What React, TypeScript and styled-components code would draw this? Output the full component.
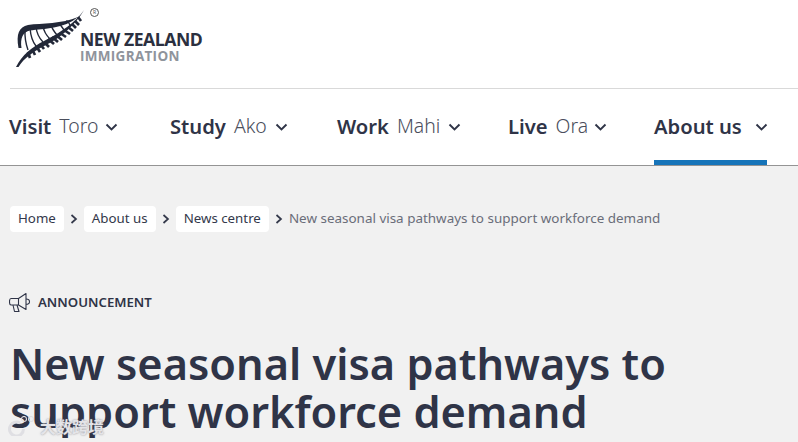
import React from 'react';
import styled, { createGlobalStyle } from 'styled-components';

const GlobalStyle = createGlobalStyle`
  html, body {
    margin: 0;
    padding: 0;
    height: 442px;
    overflow: hidden;
    background: #f1f1f1;
    font-family: "Noto Sans", "Liberation Sans", sans-serif;
    color: #2f3447;
  }
`;

const Page = styled.div`
  position: relative;
  width: 798px;
  height: 442px;
  overflow: hidden;
`;

const Header = styled.header`
  background: #fff;
  border-bottom: 1px solid #949494;
`;

const LogoBar = styled.div`
  height: 88px;
  margin-left: 10px;
  border-bottom: 1px solid #d9d9d9;
  display: flex;
  align-items: flex-start;
  position: relative;
`;

const FernMark = styled.svg`
  width: 72px;
  height: 60px;
  margin: 9px 0 0 5px;
  flex: none;
`;

const LogoText = styled.div`
  margin: 30px 0 0 -7px;
`;

const LogoMain = styled.div`
  font-family: "Open Sans", sans-serif;
  font-size: 17.6px;
  font-weight: 700;
  letter-spacing: -0.45px;
  line-height: 18px;
  color: #2b3040;
  white-space: nowrap;
`;

const LogoSub = styled.div`
  font-family: "Open Sans", sans-serif;
  font-size: 13.5px;
  font-weight: 700;
  letter-spacing: 0.3px;
  line-height: 16px;
  color: #8f949c;
`;

const Nav = styled.nav`
  height: 76px;
  padding-left: 9px;
  display: flex;
`;

const NavItem = styled.div<{ $width: number }>`
  width: ${p => p.$width}px;
  height: 76px;
  box-sizing: border-box;
  padding-top: 21px;
  display: flex;
  align-items: flex-start;
  font-size: 20.2px;
  line-height: 32px;
  white-space: nowrap;
`;

const ActiveTab = styled.div`
  width: 113px;
  height: 76px;
  margin-top: -21px;
  padding-top: 21px;
  box-sizing: border-box;
  display: flex;
  align-items: flex-start;
  border-bottom: 5px solid #1674b9;
`;

const NavMain = styled.span`
  font-weight: 600;
  color: #2f3447;
  margin-right: 8px;
`;

const NavSub = styled.span`
  font-size: 19.4px;
  font-weight: 300;
  color: #4a4e5c;
`;

const Chevron = styled.svg<{ $gap: number }>`
  width: 13px;
  height: 9px;
  margin: 13px 0 0 ${p => p.$gap}px;
  flex: none;
`;

const Crumbs = styled.ol`
  list-style: none;
  margin: 0;
  padding: 40px 0 0 10px;
  display: flex;
  align-items: center;
  height: 26px;
  font-size: 13.3px;
`;

const CrumbLink = styled.li`
  background: #fff;
  border-radius: 4px;
  height: 26px;
  line-height: 24px;
  padding: 0 8px;
  color: #33384a;
  white-space: nowrap;
`;

const CrumbArrow = styled.svg`
  width: 8px;
  height: 10px;
  margin: 0 6px;
  flex: none;
`;

const CrumbCurrent = styled.li`
  color: #6a6d79;
  font-size: 13.45px;
  white-space: nowrap;
  line-height: 24px;
  height: 26px;
`;

const Label = styled.div`
  margin: 59px 0 0 9px;
  display: flex;
  align-items: center;
  gap: 7px;
  height: 22px;
  font-size: 13.2px;
  font-weight: 600;
  color: #2f3447;
`;

const Title = styled.h1`
  margin: 27px 0 0 10px;
  width: 720px;
  font-size: 43.3px;
  line-height: 48px;
  font-weight: 600;
  color: #2f3447;
`;

const Watermark = styled.div`
  position: absolute;
  left: 8px;
  top: 413px;
  display: flex;
  align-items: center;
  gap: 13px;
  color: #e4e4e8;
  font-size: 16px;
  font-weight: 700;
  line-height: 26px;
  font-family: "Noto Sans CJK SC", sans-serif;
  text-shadow: 0 0 2px rgba(110, 110, 120, 0.75);
`;

const WatermarkIcon = styled.svg`
  width: 28px;
  height: 20px;
  margin-right: -9px;
  flex: none;
`;

const Registered = styled.span`
  position: absolute;
  left: 80px;
  top: 8px;
  width: 7px;
  height: 7px;
  border: 1px solid #555;
  border-radius: 50%;
  font-size: 5px;
  line-height: 7px;
  text-align: center;
  color: #555;
`;

const Down = ({ gap }: { gap: number }) => (
  <Chevron $gap={gap} viewBox="0 0 13 9" fill="none" stroke="#2f3447" strokeWidth="1.9">
    <path d="M1.500 1.500 6.500 6.500 11.500 1.500" />
  </Chevron>
);

const Arrow = () => (
  <CrumbArrow viewBox="0 0 8 10" fill="none" stroke="#33384a" strokeWidth="1.7">
    <path d="M1.500 1 6 5 1.500 9" />
  </CrumbArrow>
);

// midrib point -> end of the frond, coordinates are page pixels
const lowerFronds = [
  [78, 17, 81, 21], [75, 21, 79, 25], [72, 24, 76, 28], [68, 27, 73, 31], [64, 30, 70, 34],
  [60, 33, 66, 37], [56, 35, 62, 40], [52, 37, 58, 42], [48, 39, 54, 44], [44, 42, 49, 47],
  [40, 44, 44, 49], [36, 46, 40, 52], [32, 49, 35, 55], [28, 52, 30, 58],
];

const upperRibs = [
  [70, 25, 66, 22], [64, 30, 59, 24], [57, 35, 51, 25],
  [50, 39, 43, 26], [43, 42, 36, 27], [36, 46, 30, 28],
];

const Fern = () => (
  <FernMark viewBox="15 9 72 60" fill="#222838">
    <path d="M84 10C76 22 60 33 44 41C32 47 22 55 16 67L18.500 67C24 58 34 51 46 45C62 37 76 24 84 10Z" />
    <path d="M78 17C62 24 42 23 28 25C19 27 16 34 18.500 48L21.500 48C20 38 23 32 30 30.500C44 28.500 64 29 78 17Z" />
    {lowerFronds.map(([x1, y1, x2, y2]) => (
      <path key={x1} d={`M${x1} ${y1}L${x2} ${y2}`} stroke="#222838" strokeWidth="2.700" fill="none" />
    ))}
    {upperRibs.map(([x1, y1, x2, y2]) => (
      <path key={x1} d={`M${x1} ${y1}Q${x2 + 1} ${y1 - 6} ${x2} ${y2}`} stroke="#222838" strokeWidth="1.400" fill="none" />
    ))}
    <path d="M28 50Q24.500 40 25 30" stroke="#222838" strokeWidth="1.400" fill="none" />
  </FernMark>
);

const Megaphone = () => (
  <svg width="22" height="21" viewBox="0 0 22 21" fill="none" stroke="#2f3447" strokeWidth="1.100" strokeLinejoin="round">
    <path d="M2 6.500H9.500L17 1.500V17.500L9.500 13H2C1 13 .5 12 .5 10V9.500C.5 7.500 1 6.500 2 6.500Z" />
    <path d="M9.500 6.500V13" />
    <path d="M17 7C19 7 20.500 8.200 20.500 9.700 20.500 11.200 19 12.300 17 12.300" />
    <path d="M4 13 5.500 19.500H10L8 13" />
  </svg>
);

const WatermarkLogo = () => (
  <WatermarkIcon viewBox="0 0 28 20" fill="none" stroke="#dfdfe3">
    <path d="M12 7A7 7 0 1 0 15.500 13" strokeWidth="3" />
    <circle cx="16" cy="3" r="2.500" strokeWidth="1.100" />
    <circle cx="23" cy="3" r="2.500" strokeWidth="1.100" />
  </WatermarkIcon>
);

const navItems = [
  { main: 'Visit', sub: 'Toro', width: 161, gap: 7 },
  { main: 'Study', sub: 'Ako', width: 167, gap: 8 },
  { main: 'Work', sub: 'Mahi', width: 171, gap: 8 },
  { main: 'Live', sub: 'Ora', width: 146, gap: 6 },
];

const App = () => (
  <Page>
    <GlobalStyle />
    <Header>
      <LogoBar>
        <Fern />
        <Registered>R</Registered>
        <LogoText>
          <LogoMain>NEW ZEALAND</LogoMain>
          <LogoSub>IMMIGRATION</LogoSub>
        </LogoText>
      </LogoBar>
      <Nav>
        {navItems.map(item => (
          <NavItem key={item.main} $width={item.width}>
            <NavMain>{item.main}</NavMain>
            <NavSub>{item.sub}</NavSub>
            <Down gap={item.gap} />
          </NavItem>
        ))}
        <NavItem $width={113}>
          <ActiveTab>
            <NavMain>About us</NavMain>
            <Down gap={5} />
          </ActiveTab>
        </NavItem>
      </Nav>
    </Header>
    <main>
      <Crumbs>
        <CrumbLink>Home</CrumbLink>
        <Arrow />
        <CrumbLink>About us</CrumbLink>
        <Arrow />
        <CrumbLink>News centre</CrumbLink>
        <Arrow />
        <CrumbCurrent>New seasonal visa pathways to support workforce demand</CrumbCurrent>
      </Crumbs>
      <Label>
        <Megaphone />
        ANNOUNCEMENT
      </Label>
      <Title>New seasonal visa pathways to support workforce demand</Title>
    </main>
    <Watermark>
      <WatermarkLogo />
      大数跨境
    </Watermark>
  </Page>
);

export default App;
